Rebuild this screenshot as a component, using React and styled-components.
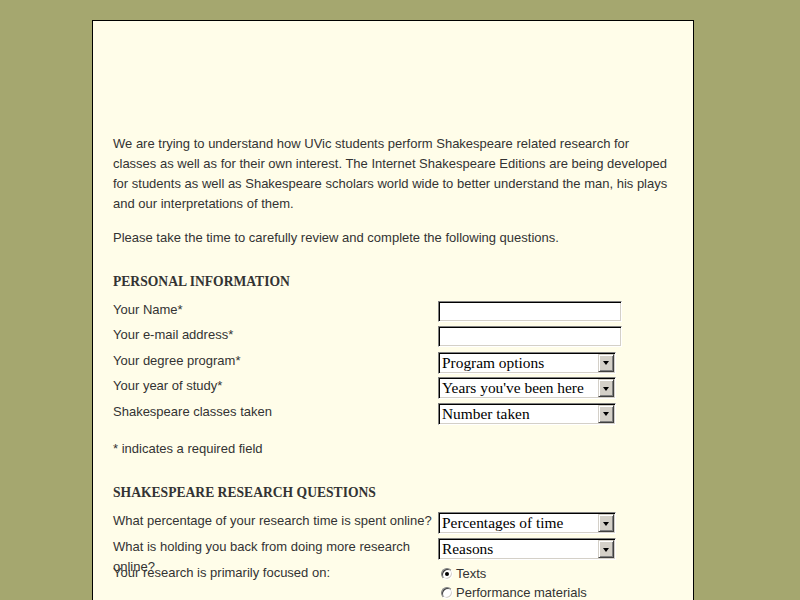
import React from "react"
import styled, { createGlobalStyle } from "styled-components"

const GlobalStyle = createGlobalStyle`
  html, body {
    margin: 0;
    padding: 0;
    background: #a5a76f;
  }
  body {
    padding-top: 20px;
    font-family: "Liberation Sans", Arial, sans-serif;
  }
`

// the reference was taken with a scrollbar, so the visible area is 785 wide
const Viewport = styled.div`
  width: 786px;
`

const Page = styled.div`
  margin: 0 auto;
  border: 1px solid #000;
  border-bottom: none;
  background: #fffde9;
  padding: 0 20px 40px;
  box-sizing: content-box;
  width: 560px;
  color: #333;
`

const Banner = styled.div`
  height: 113px;
`

const Para = styled.p`
  margin: 0 0 14px;
  font-size: 13px;
  line-height: 20px;
`

const Heading = styled.h2`
  margin: 24px 0 ${p => p.$bottom ?? 8.5}px;
  font-family: "Liberation Serif", "Times New Roman", serif;
  font-size: 13.6px;
  line-height: 20px;
  font-weight: bold;
  color: #333;
`

const Row = styled.div`
  display: grid;
  grid-template-columns: 325px 1fr;
  height: ${p => p.$h || 25.5}px;
`

const Label = styled.label`
  font-size: 13px;
  line-height: 20px;
  color: #333;
`

const Cell = styled.div`
  padding-top: 1px;
`

const TextBox = styled.input`
  display: block;
  width: 184px;
  height: 21px;
  box-sizing: border-box;
  margin: 0;
  padding: 1px 2px;
  background: #fff;
  border: 1px solid;
  border-color: #808080 #fff #fff #808080;
  box-shadow: inset 1px 1px 0 #000, inset -1px -1px 0 #d4d0c8;
  outline: none;
  font-size: 13px;
`

const SelectBox = styled.div`
  display: flex;
  width: 178px;
  height: 22px;
  box-sizing: border-box;
  padding: 1px;
  background: #fff;
  border: 1px solid;
  border-color: #808080 #fff #fff #808080;
  box-shadow: inset 1px 1px 0 #000, inset -1px -1px 0 #d4d0c8;
`

const SelectValue = styled.span`
  flex: 1;
  padding-left: 2px;
  font-family: "Liberation Serif", "Times New Roman", serif;
  font-size: 15.4px;
  line-height: 18px;
  color: #000;
  white-space: nowrap;
  overflow: hidden;
`

const DropButton = styled.span`
  display: flex;
  align-items: center;
  justify-content: center;
  width: 16px;
  height: 18px;
  box-sizing: border-box;
  background: #d4d0c8;
  border: 1px solid;
  border-color: #d4d0c8 #404040 #404040 #d4d0c8;
  box-shadow: inset 1px 1px 0 #fff, inset -1px -1px 0 #808080;
  &::after {
    content: "";
    border-left: 3.5px solid transparent;
    border-right: 3.5px solid transparent;
    border-top: 4px solid #000;
    margin-top: 1px;
  }
`

const Note = styled.p`
  margin: 11.5px 0 0;
  font-size: 13px;
  line-height: 20px;
`

const RadioLine = styled.div`
  display: flex;
  align-items: center;
  height: 19px;
  font-size: 13px;
  color: #333;
  &:first-child {
    margin-top: 1px;
  }
`

const RadioDot = styled.span`
  display: inline-flex;
  align-items: center;
  justify-content: center;
  width: 12px;
  height: 12px;
  box-sizing: border-box;
  margin: 0 3px 0 3px;
  border-radius: 50%;
  background: #fff;
  border: 1px solid;
  border-color: #808080 #fff #fff #808080;
  box-shadow: inset 1px 1px 0 #404040, inset -1px -1px 0 #d4d0c8;
  &::after {
    content: "";
    width: 4px;
    height: 4px;
    border-radius: 50%;
    background: ${p => (p.$on ? "#000" : "transparent")};
  }
`

const Select = ({ value }) => (
  <SelectBox>
    <SelectValue>{value}</SelectValue>
    <DropButton />
  </SelectBox>
)

const personal = [
  { label: "Your Name*", kind: "text" },
  { label: "Your e-mail address*", kind: "text" },
  { label: "Your degree program*", value: "Program options" },
  { label: "Your year of study*", value: "Years you've been here" },
  { label: "Shakespeare classes taken", value: "Number taken" },
]

export default function App() {
  return (
    <Viewport>
      <GlobalStyle />
      <Page>
        <Banner />
        <Para>
          We are trying to understand how UVic students perform Shakespeare related research for
          classes as well as for their own interest. The Internet Shakespeare Editions are being developed
          for students as well as Shakespeare scholars world wide to better understand the man, his plays
          and our interpretations of them.
        </Para>
        <Para>Please take the time to carefully review and complete the following questions.</Para>

        <Heading $bottom={7.5}>PERSONAL INFORMATION</Heading>
        {personal.map(f => (
          <Row key={f.label}>
            <Label>{f.label}</Label>
            <Cell>{f.kind === "text" ? <TextBox type="text" /> : <Select value={f.value} />}</Cell>
          </Row>
        ))}
        <Note>* indicates a required field</Note>

        <Heading>SHAKESPEARE RESEARCH QUESTIONS</Heading>
        <Row $h={26}>
          <Label>What percentage of your research time is spent online?</Label>
          <Cell><Select value="Percentages of time" /></Cell>
        </Row>
        <Row $h={26}>
          <Label>What is holding you back from doing more research online?</Label>
          <Cell><Select value="Reasons" /></Cell>
        </Row>
        <Row $h={60}>
          <Label>Your research is primarily focused on:</Label>
          <div>
            <RadioLine><RadioDot $on />Texts</RadioLine>
            <RadioLine><RadioDot />Performance materials</RadioLine>
          </div>
        </Row>
      </Page>
    </Viewport>
  )
}
